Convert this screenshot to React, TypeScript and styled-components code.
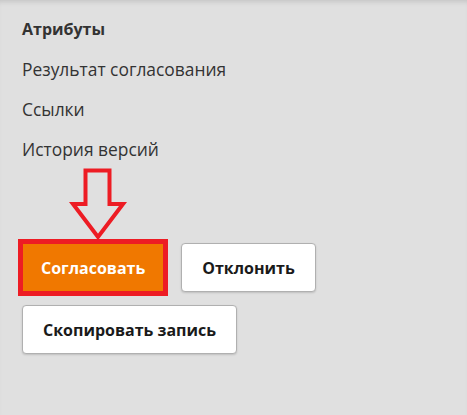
import React from "react";
import styled, { createGlobalStyle } from "styled-components";

const Global = createGlobalStyle`
  html, body { margin: 0; padding: 0; background: #e0e0e0; }
  body { font-family: "Open Sans", "Noto Sans", sans-serif; color: #333333; }
`;

const Page = styled.div`
  width: 467px;
  height: 415px;
  background: #e0e0e0;
  box-shadow: inset 0 5px 5px -3px rgba(0, 0, 0, 0.12);
  padding: 9px 0 0 22px;
  box-sizing: border-box;
`;

const Menu = styled.ul`
  list-style: none;
  margin: 0;
  padding: 0;
  display: flex;
  flex-direction: column;
`;

const MenuItem = styled.li<{ $active?: boolean }>`
  font-size: ${(p) => (p.$active ? "16px" : "17.4px")};
  line-height: 40px;
  height: 40px;
  font-weight: ${(p) => (p.$active ? 700 : 400)};
  color: #333333;
`;

const ArrowBox = styled.div`
  height: 71px;
  padding-left: 48px;
  margin-top: -1px;
  position: relative;
  z-index: 1;
  svg { display: block; overflow: visible; }
`;

const Actions = styled.div`
  display: flex;
  flex-direction: column;
  gap: 9px;
  align-items: flex-start;
`;

const Row = styled.div`
  display: flex;
  align-items: center;
  gap: 13px;
`;

const Highlight = styled.div`
  border: 5px solid #ed1c24;
  margin-left: -4px;
  display: flex;
`;

const Button = styled.button<{ $primary?: boolean }>`
  font-family: "Open Sans", "Noto Sans", sans-serif;
  font-weight: 700;
  font-size: 16px;
  height: ${(p) => (p.$primary ? "47px" : "49px")};
  padding: 0 ${(p) => (p.$primary ? "18px" : "20px")};
  border-radius: ${(p) => (p.$primary ? "0" : "4px")};
  border: ${(p) => (p.$primary ? "none" : "1px solid #b0b0b0")};
  background: ${(p) => (p.$primary ? "#f07800" : "#ffffff")};
  color: ${(p) => (p.$primary ? "#ffffff" : "#1a1a1a")};
  box-shadow: ${(p) => (p.$primary ? "none" : "0 1px 2px rgba(0,0,0,0.15)")};
  cursor: pointer;
`;

const DownArrow = () => (
  <svg width="58" height="72" viewBox="0 0 58 72">
    <path
      d="M15.5 2.5 H39.5 V36 H53 L28 69 L3 36 H15.5 Z"
      fill="none"
      stroke="#ed1c24"
      strokeWidth="4"
      strokeLinejoin="miter"
    />
  </svg>
);

export default function App() {
  return (
    <>
      <Global />
      <Page>
        <Menu>
          <MenuItem $active>Атрибуты</MenuItem>
          <MenuItem>Результат согласования</MenuItem>
          <MenuItem>Ссылки</MenuItem>
          <MenuItem>История версий</MenuItem>
        </Menu>
        <ArrowBox>
          <DownArrow />
        </ArrowBox>
        <Actions>
          <Row>
            <Highlight>
              <Button $primary>Согласовать</Button>
            </Highlight>
            <Button>Отклонить</Button>
          </Row>
          <Button>Скопировать запись</Button>
        </Actions>
      </Page>
    </>
  );
}
